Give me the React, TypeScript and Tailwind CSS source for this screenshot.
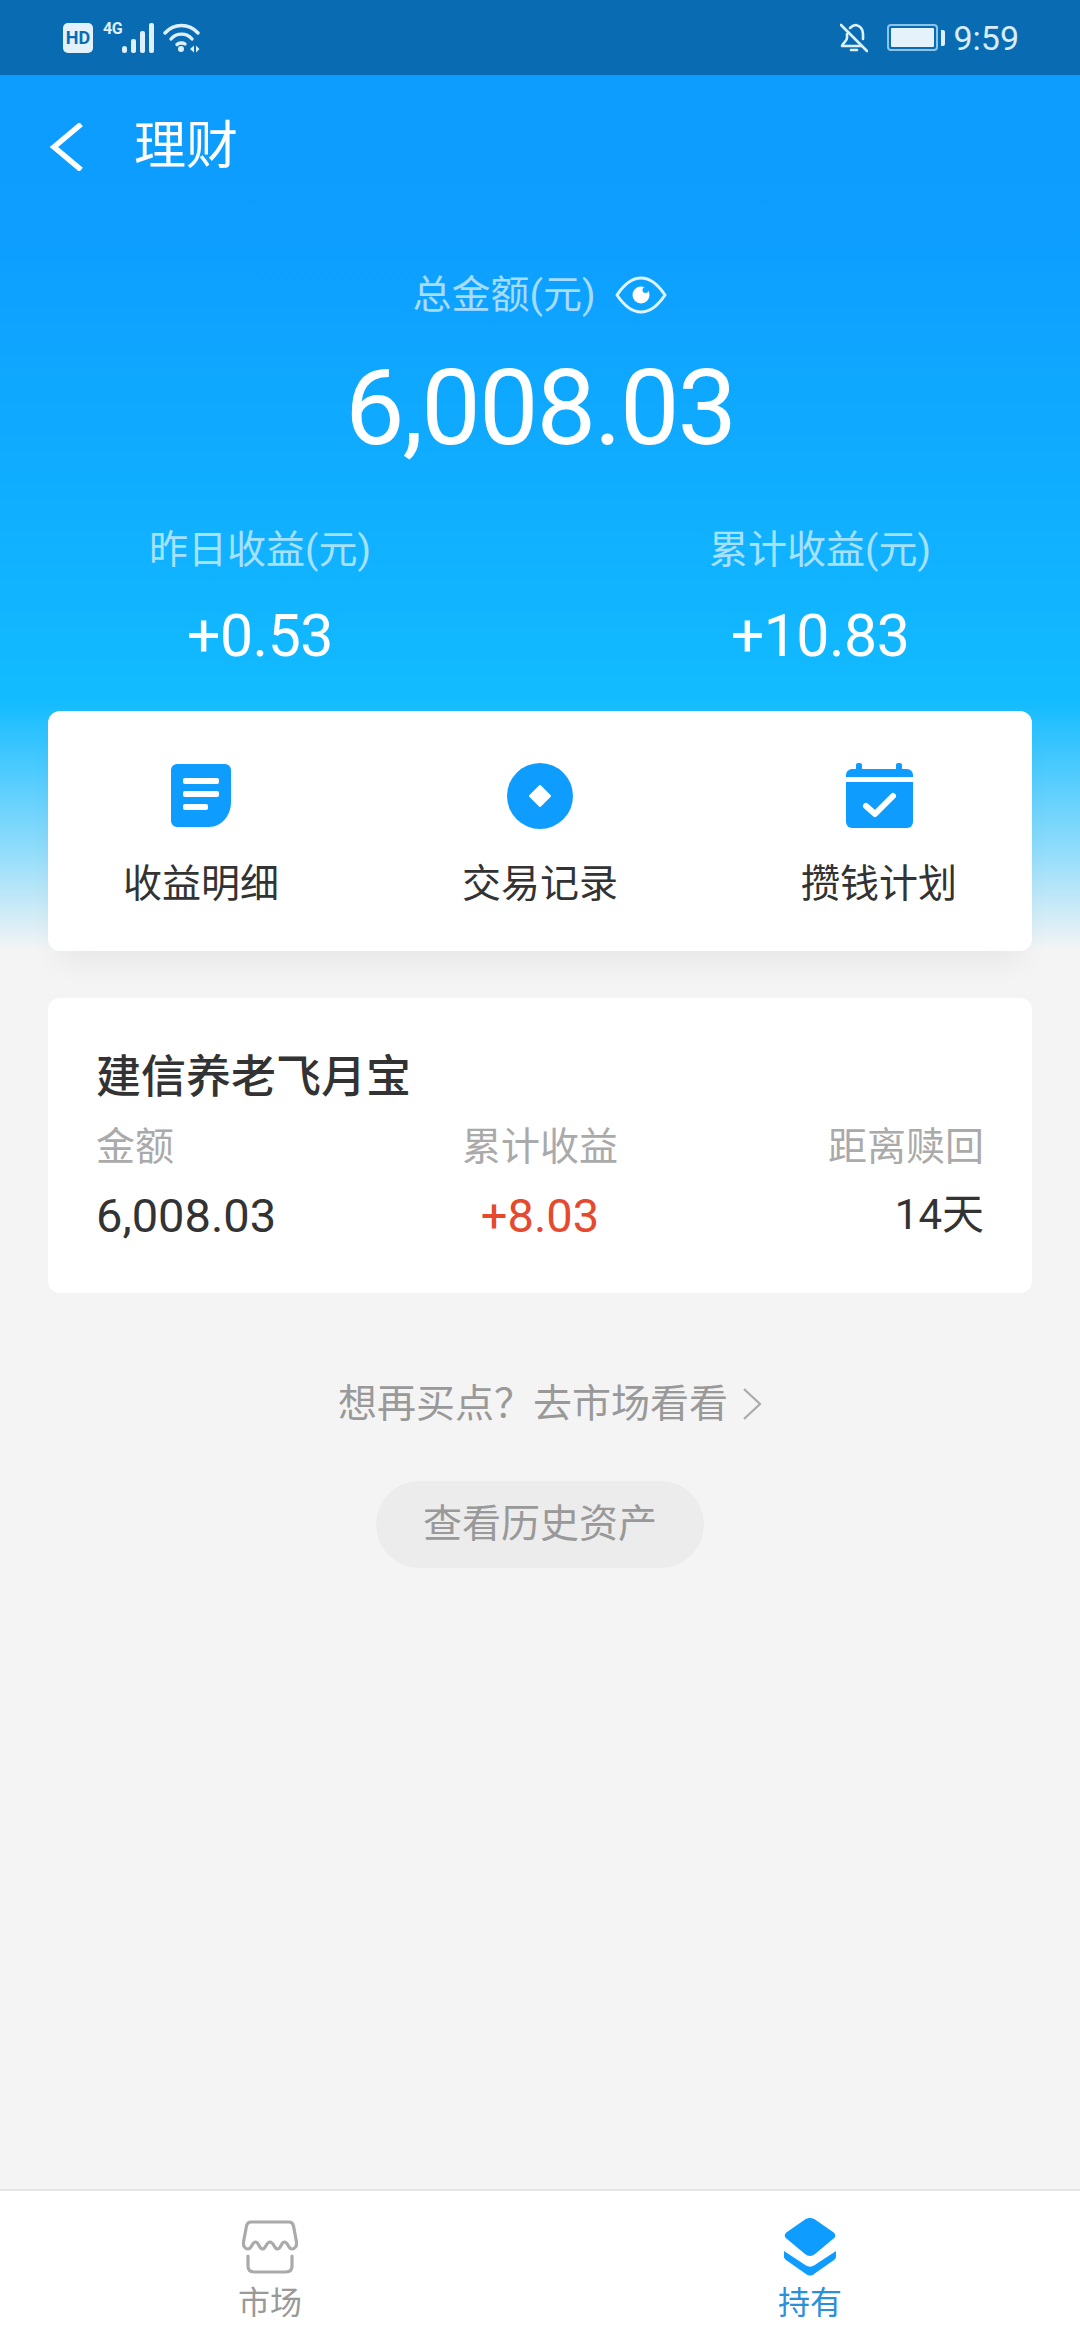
const cjk = "font-['Roboto','Noto_Sans_CJK_SC',sans-serif]";

const SignalIcon = () => (
  <svg width="33" height="30" viewBox="0 0 33 30" fill="#dff0fb">
    <rect x="0" y="23" width="5" height="7" rx="2.5" />
    <rect x="9" y="16" width="5" height="14" rx="2" />
    <rect x="18" y="8" width="5" height="22" rx="2" />
    <rect x="27" y="0" width="5" height="30" rx="2" />
  </svg>
);

const WifiIcon = () => (
  <svg width="37" height="30" viewBox="0 0 37 30" fill="none" stroke="#dff0fb" strokeWidth="3.4" strokeLinecap="round">
    <path d="M2 10 C 11 0, 26 0, 35 10" />
    <path d="M8 16 C 13.5 9.5, 23.5 9.5, 29 16" />
    <circle cx="18" cy="26" r="3" fill="#dff0fb" stroke="none" />
    <path d="M14 21.5 C 16 19.5, 20 19.5, 22 21" />
    <path d="M27 26 L31 22.5 V29.5 Z M33 22.5 L36.5 26 L33 29.5 Z" fill="#dff0fb" stroke="none" />
  </svg>
);

const BellOffIcon = () => (
  <svg width="28" height="30" viewBox="0 0 28 30" fill="none" stroke="#dff0fb" strokeWidth="2.6" strokeLinecap="round" strokeLinejoin="round">
    <path d="M10 5 C 12 3, 14 2, 16 2 C 20 3, 23 6, 23 11 V 16" />
    <path d="M7 11 V 15 C 7 18, 3 20, 2 23 H 21" />
    <path d="M1 2 L 27 28" />
    <path d="M11 27 H 17" />
  </svg>
);

const BatteryIcon = () => (
  <div className="flex items-center gap-[3px]">
    <div className="w-[51px] h-[27px] rounded-[4px] border-2 border-[#8cc4e8] p-[2px]">
      <div className="w-full h-full bg-[#e6f2fb] rounded-[1px]" />
    </div>
    <div className="w-[4px] h-[16px] rounded-r-[2px] bg-[#dff0fb]" />
  </div>
);

const StatusBar = () => (
  <div className="h-[75px] bg-[#096cb3] flex items-center justify-between pl-[63px] pr-[61px] shrink-0">
    <div className="flex items-center">
      <div className="w-[30px] h-[30px] rounded-[5px] bg-[#e3f1fb] text-[#096cb3] text-[18px] font-bold leading-none flex items-center justify-center font-['Roboto',sans-serif]">HD</div>
      <div className="relative w-[28px] h-[30px] ml-[10px]">
        <span className="absolute left-0 -top-[3px] text-[16px] font-bold leading-[18px] tracking-tight text-[#dff0fb] font-['Roboto',sans-serif]">4G</span>
      </div>
      <div className="-ml-[9px]"><SignalIcon /></div>
      <div className="ml-[8px]"><WifiIcon /></div>
    </div>
    <div className="flex items-center">
      <BellOffIcon />
      <div className="ml-[19px]"><BatteryIcon /></div>
      <span className="ml-[8px] text-[34px] leading-none text-[#d8ecfa] font-['Roboto',sans-serif]">9:59</span>
    </div>
  </div>
);

const EyeIcon = () => (
  <svg width="52" height="38" viewBox="0 0 52 38" fill="none">
    <path d="M2 19 C 10 7, 18 2, 26 2 C 34 2, 42 7, 50 19 C 42 31, 34 36, 26 36 C 18 36, 10 31, 2 19 Z" stroke="#dff4ff" strokeWidth="3" strokeLinejoin="round" />
    <circle cx="26" cy="19" r="8.5" fill="#ffffff" />
    <circle cx="30.5" cy="14" r="3" fill="#11a3ff" />
  </svg>
);

const DocIcon = () => (
  <svg width="60" height="64" viewBox="0 0 60 64">
    <path d="M6 0 H54 A6 6 0 0 1 60 6 V38 C 60 52, 50 63, 38 63 H6 A6 6 0 0 1 0 57 V6 A6 6 0 0 1 6 0 Z" fill="#0e9dff" />
    <rect x="12" y="14" width="36" height="6" rx="2" fill="#ffffff" />
    <rect x="12" y="27" width="36" height="6" rx="2" fill="#ffffff" />
    <rect x="12" y="40" width="25" height="6" rx="2" fill="#ffffff" />
  </svg>
);

const CoinIcon = () => (
  <svg width="66" height="66" viewBox="0 0 66 66">
    <circle cx="33" cy="33" r="33" fill="#0e9dff" />
    <path d="M33 23 L 43 33 L 33 43 L 23 33 Z" fill="#ffffff" stroke="#ffffff" strokeWidth="2" strokeLinejoin="round" />
  </svg>
);

const CalendarIcon = () => (
  <svg width="67" height="66" viewBox="0 0 67 66">
    <rect x="10" y="0" width="6" height="10" rx="2" fill="#0e9dff" />
    <rect x="50" y="0" width="6" height="10" rx="2" fill="#0e9dff" />
    <path d="M6 6 H61 A6 6 0 0 1 67 12 V14 H0 V12 A6 6 0 0 1 6 6 Z" fill="#0e9dff" />
    <path d="M0 19 H67 V59 A6 6 0 0 1 61 65 H6 A6 6 0 0 1 0 59 Z" fill="#0e9dff" />
    <path d="M20 43 L 29 51 L 47 33" fill="none" stroke="#ffffff" strokeWidth="6" strokeLinecap="round" strokeLinejoin="round" />
  </svg>
);

const StoreIcon = () => (
  <svg width="56" height="54" viewBox="0 0 56 54" fill="none" stroke="#aaaaaa" strokeWidth="3.2" strokeLinecap="round" strokeLinejoin="round">
    <path d="M9 2 H47 C 50 2, 51 3.5, 51.5 6 L 54.5 22 C 55 26, 53 29, 50 29 C 46 29, 46 22, 42.5 22 C 39 22, 39 29, 35.5 29 C 32 29, 32 22, 28 22 C 24 22, 24 29, 20.5 29 C 17 29, 17 22, 13.5 22 C 10 22, 10 29, 6 29 C 3 29, 1 26, 1.5 22 L 4.5 6 C 5 3.5, 6 2, 9 2 Z" />
    <path d="M6 36 V46 C 6 50, 8 52, 12 52 H44 C 48 52, 50 50, 50 46 V36" />
  </svg>
);

const LayersIcon = () => (
  <svg width="52" height="58" viewBox="0 0 52 58" fill="#0e9dff">
    <path d="M21 1.5 C 24 -0.5, 28 -0.5, 31 1.5 L 49 14 C 52 16, 52 19, 49 21 L 31 36 C 28 38.5, 24 38.5, 21 36 L 3 21 C 0 19, 0 16, 3 14 Z" />
    <path d="M0 33 L 22 47.5 C 24.5 49, 27.5 49, 30 47.5 L 52 33 V 39 C 52 40, 51 41, 50 42 L 30 56 C 27.5 58, 24.5 58, 22 56 L 2 42 C 1 41, 0 40, 0 39 Z" />
  </svg>
);

const actions = [
  { icon: DocIcon, label: '收益明细' },
  { icon: CoinIcon, label: '交易记录' },
  { icon: CalendarIcon, label: '攒钱计划' },
];

const Summary = ({ label, value }: { label: string; value: string }) => (
  <div className="w-[340px] flex flex-col items-center">
    <div className="text-[39px] leading-[52px] text-[#a6e2ff]">{label}</div>
    <div className="mt-[26px] text-[59px] leading-[68px] font-[450] tracking-[-0.5px] text-white">{value}</div>
  </div>
);

const App = () => {
  return (
    <div className={`w-[1080px] h-[2340px] flex flex-col bg-[#f4f4f4] overflow-hidden ${cjk}`}>
      <StatusBar />

      <div className="flex-1 flex flex-col bg-[linear-gradient(180deg,#0d9cff_0px,#0d9eff_160px,#12bbff_625px,#90dcfb_775px,#f4f4f4_875px)]">
        {/* Nav */}
        <div className="h-[144px] flex items-center pl-[49px] shrink-0">
          <svg width="34" height="48" viewBox="0 0 34 48" fill="none" stroke="#ffffff" strokeWidth="5.5" strokeLinecap="square">
            <path d="M30 3 L 5 24 L 30 45" />
          </svg>
          <span className="ml-[51px] text-[52px] leading-none text-white">理财</span>
        </div>

        {/* Totals */}
        <div className="mt-[51px] flex items-center justify-center">
          <span className="text-[39px] leading-[50px] text-[#a6dcff]">总金额(元)</span>
          <div className="ml-[20px]"><EyeIcon /></div>
        </div>
        <div className="mt-[27px] text-center text-[106px] leading-[122px] font-[450] text-white tracking-[-2px]">6,008.03</div>

        <div className="mt-[55px] flex justify-between pl-[90px] pr-[90px]">
          <Summary label="昨日收益(元)" value="+0.53" />
          <Summary label="累计收益(元)" value="+10.83" />
        </div>

        {/* Actions card */}
        <div className="mx-[48px] mt-[41px] h-[240px] rounded-[12px] bg-white shadow-[0_20px_30px_-10px_rgba(0,0,0,0.06)] flex items-start justify-between px-[75px] pt-[52px] shrink-0">
          {actions.map((a) => (
            <div key={a.label} className="w-[156px] flex flex-col items-center">
              <div className="h-[66px] flex items-center"><a.icon /></div>
              <div className="mt-[29px] text-[39px] leading-[52px] whitespace-nowrap text-[#333333]">{a.label}</div>
            </div>
          ))}
        </div>

        {/* Holding card */}
        <div className="mx-[48px] mt-[47px] h-[295px] rounded-[12px] bg-white px-[48px] pt-[52px] shrink-0">
          <div className="text-[45px] leading-[56px] font-medium text-[#333333]">建信养老飞月宝</div>
          <div className="mt-[15px] grid grid-cols-3 text-[39px] leading-[52px] text-[#aaaaaa]">
            <span>金额</span>
            <span className="text-center">累计收益</span>
            <span className="text-right">距离赎回</span>
          </div>
          <div className="mt-[15px] grid grid-cols-3 text-[47px] leading-[56px] items-center">
            <span className="text-[#333333]">6,008.03</span>
            <span className="text-center text-[#e5492e]">+8.03</span>
            <span className="text-right text-[42px] text-[#333333] -mt-[3px]">14天</span>
          </div>
        </div>

        <div className="mt-[85px] pl-[20px] flex items-center justify-center">
          <span className="text-[39px] leading-[52px] text-[#999999]">想再买点？去市场看看</span>
          <svg className="ml-[14px]" width="20" height="34" viewBox="0 0 20 34" fill="none" stroke="#aaaaaa" strokeWidth="2.2">
            <path d="M2 2 L 18 17 L 2 32" />
          </svg>
        </div>

        <div className="mt-[51px] mx-auto w-[328px] h-[87px] rounded-full bg-[#ececec] flex items-center justify-center text-[39px] text-[#999999]">
          查看历史资产
        </div>
      </div>

      {/* Tab bar */}
      <div className="h-[151px] bg-white border-t-2 border-[#e5e5e5] flex shrink-0">
        <div className="flex-1 flex flex-col items-center pt-[27px]">
          <div className="h-[58px] flex items-center"><StoreIcon /></div>
          <div className="mt-[6px] text-[32px] leading-[42px] text-[#999999]">市场</div>
        </div>
        <div className="flex-1 flex flex-col items-center pt-[27px]">
          <div className="h-[58px] flex items-center"><LayersIcon /></div>
          <div className="mt-[6px] text-[32px] leading-[42px] text-[#2b8fda]">持有</div>
        </div>
      </div>
    </div>
  );
};

export default App;
